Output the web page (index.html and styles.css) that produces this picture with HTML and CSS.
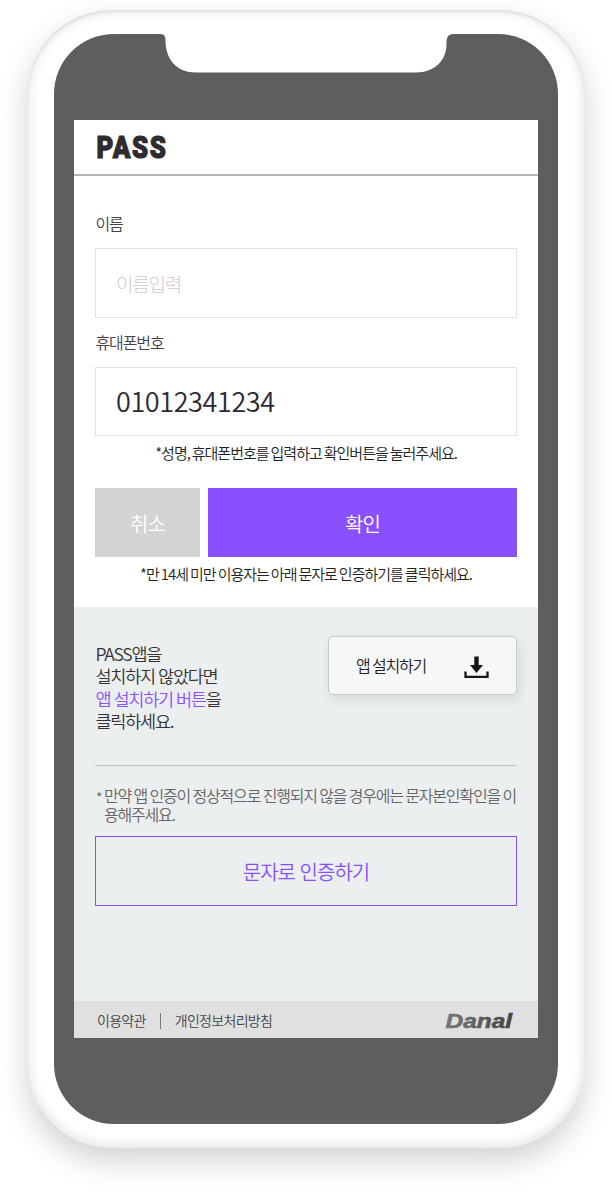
FILE: index.html
```html
<!DOCTYPE html>
<html lang="ko">
<head>
<meta charset="utf-8">
<title>PASS</title>
<link rel="stylesheet" href="styles.css">
</head>
<body>
<div class="phone">
  <div class="bezel">
    <svg class="notch" width="294" height="39" viewBox="0 0 294 39"><path d="M0 0C4 0 5.500 2 5.500 6C5.500 26 17 38.500 36 38.500H256C275 38.500 286.500 26 286.500 10C286.500 3 288 0 294 0Z" fill="#fff"/></svg>
    <main class="screen">
      <header class="header">
        <svg class="pass" width="90" height="40" viewBox="0 0 90 40"><text x="1.500" y="32.300" textLength="71" lengthAdjust="spacingAndGlyphs">PASS</text></svg>
      </header>
      <form class="form">
        <label class="label" for="name">이름</label>
        <input class="field" id="name" placeholder="이름입력">
        <label class="label" for="tel">휴대폰번호</label>
        <input class="field tel" id="tel" value="01012341234">
        <p class="note">*성명, 휴대폰번호를 입력하고 확인버튼을 눌러주세요.</p>
        <div class="actions">
          <button class="btn cancel" type="button">취소</button>
          <button class="btn ok" type="button">확인</button>
        </div>
        <p class="note">*만 14세 미만 이용자는 아래 문자로 인증하기를 클릭하세요.</p>
      </form>
      <section class="help">
        <div class="install">
          <p class="guide">PASS앱을<br>설치하지 않았다면<br><span class="accent">앱 설치하기 버튼</span>을<br>클릭하세요.</p>
          <button class="install-btn" type="button"><span>앱 설치하기</span>
            <svg width="25" height="23" viewBox="0 0 25 23"><path d="M10.300 .5h4.400v8.500h4.300L12.500 17 6 9h4.300Z" fill="#151515"/><path d="M1.500 15.500v5.400h22v-5.400" fill="none" stroke="#151515" stroke-width="2.300"/></svg>
          </button>
        </div>
        <p class="fallback"><span class="star">*</span><span>만약 앱 인증이 정상적으로 진행되지 않을 경우에는 문자본인확인을 이<br>용해주세요.</span></p>
        <button class="btn sms" type="button">문자로 인증하기</button>
      </section>
      <footer class="footer">
        <span>이용약관</span><span class="bar"></span><span>개인정보처리방침</span>
        <svg class="danal" width="76" height="30" viewBox="0 0 76 30"><defs><linearGradient id="g"><stop offset="0" stop-color="#777"/><stop offset="1" stop-color="#444"/></linearGradient></defs><text x="3.500" y="23" textLength="66.500" lengthAdjust="spacingAndGlyphs" fill="url(#g)" stroke="url(#g)">Danal</text></svg>
      </footer>
    </main>
  </div>
</div>
</body>
</html>
```
FILE: styles.css
```css
* { box-sizing: border-box; }
body {
  margin: 0;
  padding: 10px 27px 0;
  height: 1192px;
  overflow: hidden;
  background: #fff;
  font-family: "Noto Sans CJK KR", sans-serif;
  font-weight: 350;
  letter-spacing: -1px;
  color: #333;
}
p { margin: 0; }
input, button { font: inherit; letter-spacing: inherit; border-radius: 0; }
.phone {
  width: 558px;
  height: 1138px;
  padding: 24px 27px;
  border-radius: 85px;
  background: #fff;
  box-shadow: inset 0 2px 3px #dddde4, inset 0 0 12px 3px #ededf2, inset 0 -3px 8px rgba(0, 0, 0, .08), 0 13px 30px rgba(0, 0, 0, .18);
}
.bezel {
  position: relative;
  height: 1090px;
  padding: 86px 20px;
  border-radius: 60px;
  background: #5e5e5e;
}
.notch { position: absolute; top: 0; left: 106px; }
.screen {
  display: flex;
  flex-direction: column;
  height: 918px;
  background: #fff;
}
.header {
  height: 56px;
  padding: 6px 21px 0;
  border-bottom: 2px solid #b5b5b5;
}
.pass { display: block; }
.pass text {
  font: 900 32px Roboto, sans-serif;
  letter-spacing: 2px;
  fill: #2e2c2e;
  stroke: #2e2c2e;
  stroke-width: 1.2px;
}
.form {
  display: flex;
  flex-direction: column;
  height: 431px;
  padding: 35px 21px 0;
}
.label { height: 24px; padding-left: .5px; font-size: 16px; line-height: 24px; letter-spacing: -1.1px; color: #444; }
.field {
  width: 422px;
  height: 70px;
  margin: 13px 0 12px;
  padding: 0 20px;
  border: 1px solid #e2e2e2;
  outline: 0;
  background: #fff;
  font-size: 19px;
  letter-spacing: -1.2px;
  color: #2b2a35;
}
.field::placeholder { color: #ccc; opacity: 1; font-weight: 300; }
.tel { height: 69px; margin-bottom: 5px; padding-bottom: 2px; font-size: 27px; letter-spacing: -.4px; }
.note {
  height: 24px;
  font-size: 15px;
  line-height: 24px;
  word-spacing: -1.2px;
  text-align: center;
  white-space: nowrap;
  color: #222;
}
.actions { display: flex; gap: 8px; margin: 23px 0 5px; }
.btn { height: 69px; padding: 1px 0 0; border: 0; font-size: 20px; }
.cancel { width: 105px; background: #d3d3d3; color: #fff; }
.ok { width: 309px; background: #8950ff; color: #fff; }
.help { height: 394px; padding: 29px 21px 0; background: #ebeff0; }
.install {
  display: flex;
  justify-content: space-between;
  height: 130px;
  border-bottom: 1px solid #c1c4c6;
}
.guide {
  padding: 7px 0 0 .5px;
  font-size: 17.5px;
  line-height: 22.3px;
  letter-spacing: -1.25px;
  word-spacing: -.5px;
}
.accent { color: #8950ff; }
.install-btn {
  display: flex;
  align-items: center;
  justify-content: space-between;
  width: 189px;
  height: 59px;
  padding: 0 27px 1px;
  border: 1px solid #c9cccd;
  border-radius: 5px;
  background: #f6f8f8;
  box-shadow: 2px 4px 12px rgba(0, 0, 0, .1);
  font-size: 16px;
  letter-spacing: -1.2px;
  word-spacing: -.8px;
  color: #222;
}
.install-btn svg { margin-top: 4px; }
.fallback {
  display: flex;
  height: 38px;
  margin: 20px 0 12px;
  font-size: 16px;
  line-height: 19px;
  letter-spacing: -1.2px;
  word-spacing: -.8px;
  white-space: nowrap;
  color: #666;
}
.star { flex: 0 0 9px; padding: 2px 0 0 1px; font-size: 14px; }
.sms { width: 422px; height: 70px; border: 1px solid #8950ff; background: transparent; color: #8950ff; }
.footer {
  display: flex;
  align-items: center;
  height: 37px;
  padding: 0 23px;
  background: #e0e0e0;
  font-size: 14px;
  letter-spacing: -.7px;
  color: #444;
}
.bar { width: 1px; height: 16px; margin: 2px 14px 0; background: #777; }
.danal { margin: 0 -3px 0 auto; }
.danal text { font: italic bold 20px "Liberation Sans", sans-serif; letter-spacing: 0; stroke-width: .6px; }
```
